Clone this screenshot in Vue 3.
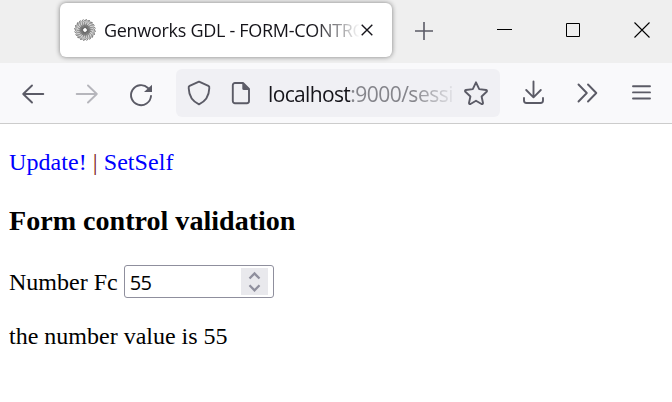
<script setup>
import { ref } from 'vue'

const value = ref('55')
const blades = Array.from({ length: 20 }, (_, i) => i * 18)
</script>

<template>
  <div class="window">
    <header class="tabs">
      <div class="tab">
        <svg class="favicon" width="22" height="22" viewBox="-11 -11 22 22">
          <g fill="none" stroke="#555" stroke-width=".55">
            <path v-for="a in blades" :key="a" :transform="`rotate(${a})`" d="M2 0C4-5 8-6 10.4-1.5C8-4 4-3 2 0" />
          </g>
          <circle r="4.2" fill="none" stroke="#666" stroke-width="2.6" opacity=".5" />
          <circle r="1.7" fill="#fff" />
        </svg>
        <span class="title">Genworks GDL - FORM-CONTRO</span>
        <svg class="close" width="12" height="12" viewBox="0 0 12 12"><path d="M.7.7l10.6 10.6M11.3.7L.7 11.3" stroke="#15141a" stroke-width="1.4" /></svg>
      </div>
      <svg class="plus" width="18" height="18" viewBox="0 0 18 18"><path d="M0 9h18M9 0v18" stroke="#5b5b66" stroke-width="1.6" /></svg>
      <div class="controls">
        <svg width="69" height="60" viewBox="0 0 69 60"><path d="M28 29.5h15" stroke="#000" /></svg>
        <svg width="69" height="60" viewBox="0 0 69 60"><path d="M28.5 23.5h13v13h-13z" fill="none" stroke="#000" /></svg>
        <svg width="69" height="60" viewBox="0 0 69 60"><path d="M27.5 22.5l15 15M42.5 22.5l-15 15" stroke="#000" stroke-width="1.1" /></svg>
      </div>
    </header>

    <nav class="toolbar">
      <svg class="tool" viewBox="0 0 54 60"><path d="M37.3 31H17.2M26 22.5L17.2 31l8.8 8.5" /></svg>
      <svg class="tool disabled" viewBox="0 0 54 60"><path d="M16.7 31h20.1M28 22.5l8.8 8.5-8.8 8.5" /></svg>
      <svg class="tool" viewBox="0 0 54 60">
        <path d="M37 33A10 10 0 1 1 34 25" />
        <path class="solid" d="M38 21.7V29h-8z" />
      </svg>
      <div class="address">
        <svg class="shield" width="24" height="26" viewBox="0 0 24 26"><path d="M12 1.6L21.4 5.9Q22.6 6.6 22.3 8.2C22 16.5 18 21.5 12 24.3C6 21.5 2 16.5 1.7 8.2Q1.4 6.6 2.6 5.9Z" /></svg>
        <svg class="page" width="20" height="24" viewBox="0 0 20 24"><path d="M4 2h8l6 6v12a2.2 2.2 0 0 1-2.2 2.2H4A2.2 2.2 0 0 1 1.8 20V4.2A2.2 2.2 0 0 1 4 2z" /><path class="solid" d="M11.3 2l7 7h-5.5q-1.5 0-1.5-1.5z" /></svg>
        <span class="url">localhost<span class="path">:9000/sessi</span></span>
        <svg class="star" width="26" height="26" viewBox="0 0 26 26"><path d="M13 2.3L16.2 9.1L23.1 10Q24.6 10.5 23.6 11.8L18.6 16.5L20 23Q20 24.5 18.5 24L13 20.8L7.5 24Q6 24.5 6 23L7.4 16.5L2.4 11.8Q1.4 10.5 2.9 10L9.8 9.1Z" /></svg>
      </div>
      <svg class="tool" viewBox="0 0 54 60"><path d="M27.5 18.5v15.5M20.2 27l7.3 7.3 7.3-7.3M18 35V37.5a2.5 2.5 0 0 0 2.5 2.5h14A2.5 2.5 0 0 0 37 37.5v-2.5" /></svg>
      <svg class="tool" viewBox="0 0 54 60"><path d="M18.5 21.5l8.3 8.5-8.3 8.5M28 21.5l8.3 8.5-8.3 8.5" /></svg>
      <svg class="tool" viewBox="0 0 54 60"><path d="M19 23.3h17M19 29.4h17M19 35.5h17" /></svg>
    </nav>

    <main class="content">
      <p class="links"><a>Update!</a> <span class="bar">|</span> <a>SetSelf</a></p>
      <h3>Form control validation</h3>
      <div class="field">
        <label for="number-fc">Number Fc</label>
        <div class="number">
          <input id="number-fc" v-model="value" type="text" inputmode="numeric">
          <svg class="spinner" width="27" height="27" viewBox="0 0 27 27"><path d="M8.5 10.5L13.5 5.5l5 5M8.5 17.3l5 5 5-5" /></svg>
        </div>
      </div>
      <p class="result">the number value is {{ value }}</p>
    </main>
  </div>
</template>

<style>
body { background: #fff; }
</style>

<style scoped>
.window { width: 672px; height: 402px; overflow: hidden; background: #fff; }
svg { display: block; flex: none; }
.tabs { display: flex; height: 63px; background: #efefef; font-family: "Open Sans", sans-serif; }
.tab {
  box-sizing: border-box; flex: none; width: 332px; height: 54px; margin: 3px 0 0 60px; padding-left: 14px;
  display: flex; align-items: center; border-radius: 6px; background: #fff;
  box-shadow: 0 0 5px rgba(0, 0, 0, .48);
}
.title {
  width: 255px; margin-left: 8px; overflow: hidden; white-space: nowrap; color: #15141a;
  font-size: 18px; line-height: 28px; letter-spacing: -.3px;
  mask-image: linear-gradient(to right, #000 210px, transparent 256px);
}
.close { margin-left: 2px; }
.plus { flex: none; margin: 22px 0 0 23px; }
.controls { display: flex; width: 203px; margin-left: 36px; }
.toolbar {
  box-sizing: border-box; display: flex; height: 61px; padding-left: 6px;
  background: #f9f9fb; border-bottom: 1px solid #ccc;
}
.tool { width: 54px; height: 60px; }
.tool path, .address path { fill: none; stroke: #5b5b66; stroke-width: 1.9; stroke-linecap: round; stroke-linejoin: round; }
.tool .solid, .address .solid { fill: #5b5b66; stroke: none; }
.disabled { opacity: .42; }
.address {
  display: flex; align-items: center; width: 324px; height: 48px; margin: 6px 6px 0 8px;
  border-radius: 6px; background: #f0f0f4;
}
.shield { margin-left: 11px; }
.page { margin-left: 20px; }
.url {
  width: 185px; margin: 2px 0 0 17px; overflow: hidden; white-space: nowrap; color: #15141a;
  font: 21px/32px "Open Sans", sans-serif; letter-spacing: -.65px;
  mask-image: linear-gradient(to right, #000 145px, transparent 190px);
}
.path { color: #85858b; letter-spacing: -.5px; }
.star { margin-left: 10px; }
.content { padding: 25px 9px; color: #000; font: 24px/27px "Liberation Serif", serif; }
p, h3 { margin: 0; }
a { color: #00f; }
.links { letter-spacing: .06px; }
.bar { color: #7b1818; }
h3 { margin-top: 29px; font-size: 28.08px; line-height: 32px; }
.field { display: flex; align-items: center; margin-top: 28px; height: 33px; }
label { padding-top: 2px; }
.number {
  box-sizing: border-box; display: flex; align-items: center; width: 150px; height: 33px; margin-left: 6px;
  padding: 0 5px; border: 1px solid #8f8f9d; border-radius: 3px; background: #fff;
}
input {
  flex: 1; min-width: 0; padding: 2px 0 0; border: 0; outline: 0; background: none; color: #000;
  font: 20px/27px "Open Sans", sans-serif; letter-spacing: -.6px;
}
.spinner { background: #e9e9ed; }
.spinner path { fill: none; stroke: #8f8f9d; stroke-width: 2.3; }
.result { margin-top: 25px; }
</style>
